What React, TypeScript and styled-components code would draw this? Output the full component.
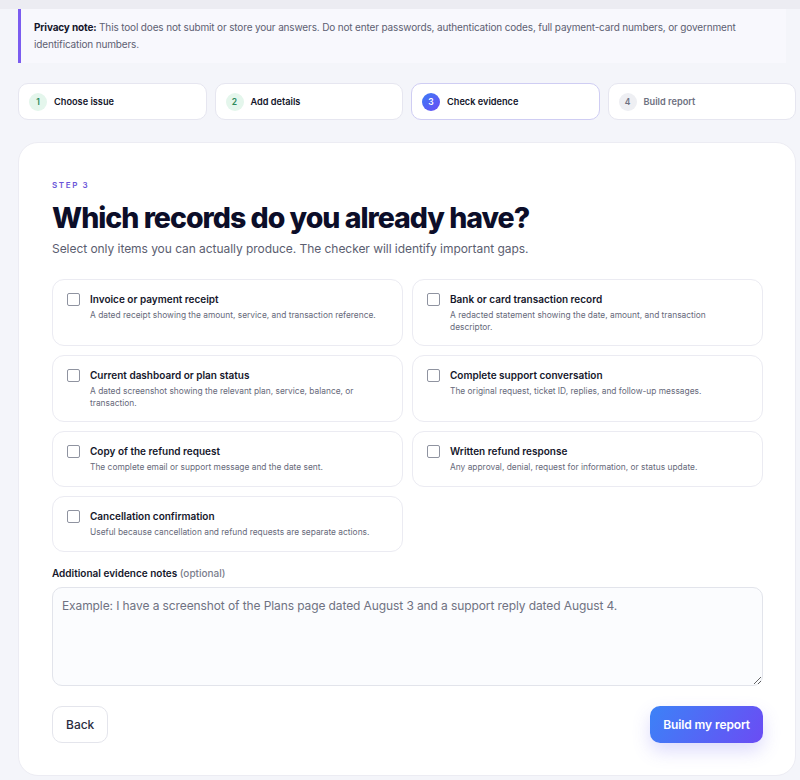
import React, { useState } from 'react'
import styled, { createGlobalStyle, css } from 'styled-components'

const GlobalStyle = createGlobalStyle`
  html, body {
    margin: 0;
    padding: 0;
    background: #f4f5fa;
    font-family: Inter, "Noto Sans", "Liberation Sans", sans-serif;
    color: #14162b;
  }
  * { box-sizing: border-box; }
`

const Page = styled.div`
  padding: 0 4px 40px 18px;
`

const TopStrip = styled.div`
  height: 9px;
  margin: 0 -4px 0 -18px;
  background: #ececf2;
`

const Note = styled.div`
  margin-right: 10px;
  padding: 10px 16px 10px 13px;
  border-left: 3px solid #7b5cf0;
  background: #f8f8fd;
  font-size: 10px;
  line-height: 17px;
  letter-spacing: -0.15px;
  color: #5d6072;
  strong {
    color: #14162b;
    font-weight: 700;
  }
`

const Steps = styled.div`
  display: grid;
  grid-template-columns: repeat(4, 1fr);
  gap: 8px;
  margin-top: 20px;
`

type StepState = 'done' | 'active' | 'todo'

const Step = styled.div<{ $state: StepState }>`
  height: 37px;
  display: flex;
  align-items: center;
  gap: 7px;
  padding: 0 10px;
  background: #fff;
  border: 1px solid ${({ $state }) => ($state === 'active' ? '#cfcdf3' : '#e6e6f0')};
  border-radius: 10px;
  font-size: 9.2px;
  font-weight: 600;
  color: ${({ $state }) => ($state === 'todo' ? '#6e7181' : '#14162b')};
`

const StepNum = styled.span<{ $state: StepState }>`
  width: 18px;
  height: 18px;
  border-radius: 50%;
  display: grid;
  place-items: center;
  font-size: 8.5px;
  font-weight: 600;
  ${({ $state }) =>
    $state === 'done'
      ? css`
          background: #e4f6ec;
          color: #2b8a5a;
        `
      : $state === 'active'
      ? css`
          background: linear-gradient(135deg, #3b7cf6, #6a4cf4);
          color: #fff;
        `
      : css`
          background: #eeeff3;
          color: #6e7181;
        `}
`

const Card = styled.section`
  margin-top: 22px;
  padding: 37px 32px 32px 33px;
  background: #fff;
  border: 1px solid #ececf3;
  border-radius: 20px;
`

const Eyebrow = styled.div`
  font-size: 8px;
  font-weight: 600;
  letter-spacing: 1.6px;
  color: #6a55d8;
`

const Title = styled.h1`
  margin: 10px 0 0;
  font-size: 28.5px;
  line-height: 36px;
  font-weight: 800;
  letter-spacing: -1px;
  color: #0c0e29;
`

const Subtitle = styled.p`
  margin: 4px 0 0;
  font-size: 12px;
  line-height: 18px;
  letter-spacing: -0.05px;
  color: #5b5e70;
`

const Options = styled.div`
  display: grid;
  grid-template-columns: 1fr 1fr;
  gap: 9px;
  margin-top: 21px;
`

const Option = styled.label`
  display: flex;
  gap: 10px;
  min-height: 56px;
  padding: 12px 14px 12px 14px;
  border: 1px solid #ebebf2;
  border-radius: 12px;
  background: #fff;
  cursor: pointer;
`

const Box = styled.span<{ $checked: boolean }>`
  flex: none;
  width: 13px;
  height: 13px;
  margin-top: 1px;
  border: 1.3px solid #8f93a0;
  border-radius: 2px;
  background: ${({ $checked }) => ($checked ? '#5b5cf0' : '#fff')};
`

const OptionText = styled.div`
  display: flex;
  flex-direction: column;
  gap: 3px;
`

const OptionTitle = styled.span`
  font-size: 10px;
  line-height: 14px;
  font-weight: 600;
  color: #15172b;
`

const OptionDesc = styled.span`
  font-size: 8.4px;
  line-height: 12px;
  color: #676a7b;
`

const FieldLabel = styled.div`
  margin-top: 15px;
  font-size: 10px;
  line-height: 13px;
  font-weight: 600;
  color: #15172b;
  span {
    font-weight: 500;
    color: #7a7d8c;
  }
`

const Notes = styled.textarea`
  display: block;
  width: 100%;
  height: 99px;
  margin-top: 7px;
  padding: 9px 9px;
  border: 1px solid #e2e4eb;
  border-radius: 10px;
  background: #fbfcfe;
  font-family: inherit;
  font-size: 12px;
  line-height: 17px;
  letter-spacing: -0.1px;
  color: #14162b;
  resize: vertical;
  &::placeholder {
    color: #6f7282;
  }
`

const Actions = styled.div`
  display: flex;
  justify-content: space-between;
  margin-top: 20px;
`

const Button = styled.button<{ $primary?: boolean }>`
  height: 37px;
  padding: 0 13px;
  border-radius: 10px;
  font-family: inherit;
  font-size: 12px;
  cursor: pointer;
  ${({ $primary }) =>
    $primary
      ? css`
          border: 0;
          padding: 0 13px;
          background: linear-gradient(120deg, #3c82f7, #6b4cf4);
          color: #fff;
          font-weight: 600;
          letter-spacing: -0.1px;
          box-shadow: 0 8px 18px rgba(99, 90, 240, 0.22);
        `
      : css`
          border: 1px solid #e4e5ec;
          background: #fff;
          color: #2b2d40;
          font-weight: 500;
        `}
`

const steps: { label: string; state: StepState }[] = [
  { label: 'Choose issue', state: 'done' },
  { label: 'Add details', state: 'done' },
  { label: 'Check evidence', state: 'active' },
  { label: 'Build report', state: 'todo' },
]

const records = [
  ['Invoice or payment receipt', 'A dated receipt showing the amount, service, and transaction reference.'],
  ['Bank or card transaction record', 'A redacted statement showing the date, amount, and transaction descriptor.'],
  ['Current dashboard or plan status', 'A dated screenshot showing the relevant plan, service, balance, or transaction.'],
  ['Complete support conversation', 'The original request, ticket ID, replies, and follow-up messages.'],
  ['Copy of the refund request', 'The complete email or support message and the date sent.'],
  ['Written refund response', 'Any approval, denial, request for information, or status update.'],
  ['Cancellation confirmation', 'Useful because cancellation and refund requests are separate actions.'],
]

export default function App() {
  const [checked, setChecked] = useState<Record<number, boolean>>({})

  return (
    <>
      <GlobalStyle />
      <TopStrip />
      <Page>
        <Note>
          <strong>Privacy note:</strong> This tool does not submit or store your answers. Do not enter
          passwords, authentication codes, full payment-card numbers, or government identification numbers.
        </Note>

        <Steps>
          {steps.map((s, i) => (
            <Step key={s.label} $state={s.state}>
              <StepNum $state={s.state}>{i + 1}</StepNum>
              {s.label}
            </Step>
          ))}
        </Steps>

        <Card>
          <Eyebrow>STEP 3</Eyebrow>
          <Title>Which records do you already have?</Title>
          <Subtitle>
            Select only items you can actually produce. The checker will identify important gaps.
          </Subtitle>

          <Options>
            {records.map(([title, desc], i) => (
              <Option key={title} onClick={() => setChecked({ ...checked, [i]: !checked[i] })}>
                <Box $checked={!!checked[i]} />
                <OptionText>
                  <OptionTitle>{title}</OptionTitle>
                  <OptionDesc>{desc}</OptionDesc>
                </OptionText>
              </Option>
            ))}
          </Options>

          <FieldLabel>
            Additional evidence notes <span>(optional)</span>
          </FieldLabel>
          <Notes placeholder="Example: I have a screenshot of the Plans page dated August 3 and a support reply dated August 4." />

          <Actions>
            <Button>Back</Button>
            <Button $primary>Build my report</Button>
          </Actions>
        </Card>
      </Page>
    </>
  )
}
